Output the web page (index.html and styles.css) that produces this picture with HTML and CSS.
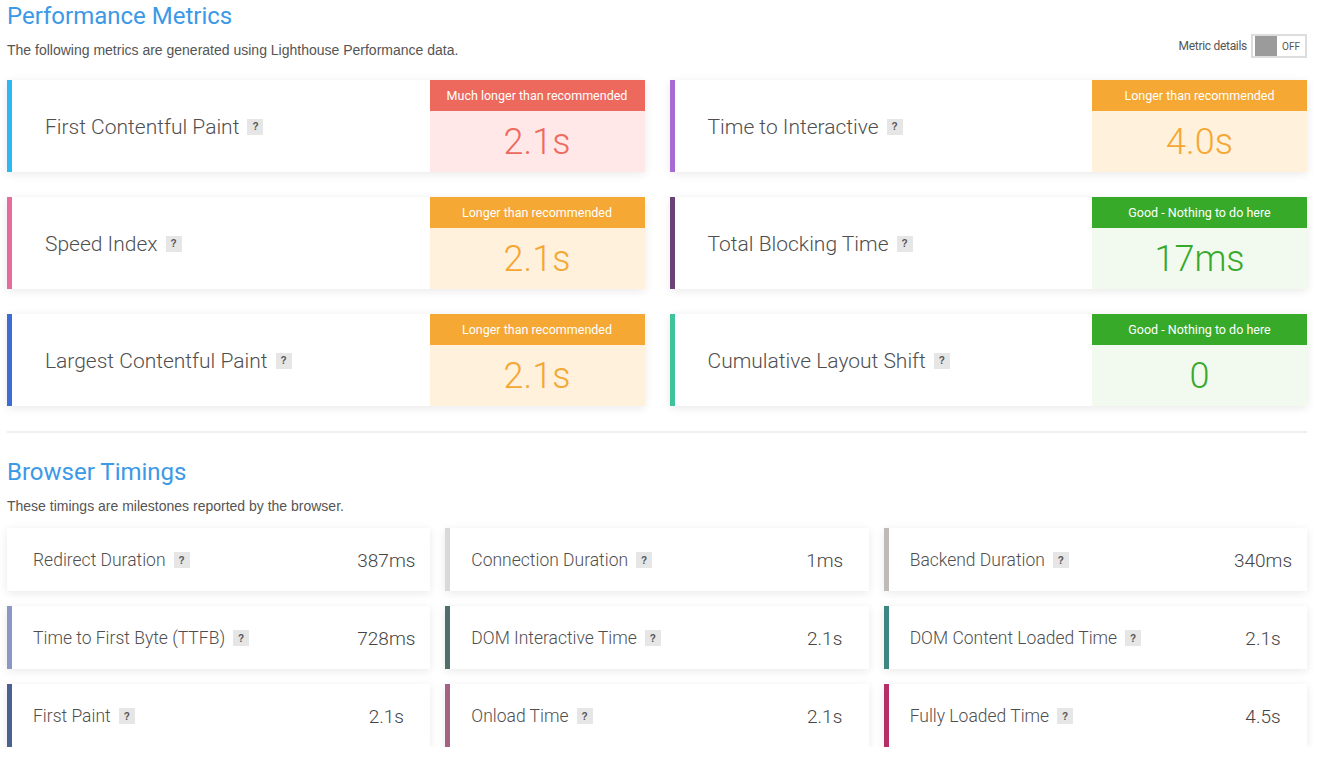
FILE: index.html
```html
<!DOCTYPE html>
<html lang="en">
<head>
<meta charset="utf-8">
<title>Performance</title>
<link rel="stylesheet" href="styles.css">
</head>
<body>
<div class="page">
  <section class="section">
    <div class="section-head">
      <div class="section-intro">
        <h2 class="section-title">Performance Metrics</h2>
        <p class="section-desc">The following metrics are generated using Lighthouse Performance data.</p>
      </div>
      <div class="toggle-wrap">
        <span class="toggle-label">Metric details</span>
        <span class="toggle"><span class="toggle-knob"></span><span class="toggle-text">OFF</span></span>
      </div>
    </div>

    <div class="metrics">
      <div class="metric bar-fcp">
        <div class="metric-label">First Contentful Paint<span class="help">?</span></div>
        <div class="grade grade-bad">
          <div class="grade-head">Much longer than recommended</div>
          <div class="grade-value">2.1s</div>
        </div>
      </div>
      <div class="metric bar-tti">
        <div class="metric-label">Time to Interactive<span class="help">?</span></div>
        <div class="grade grade-warn">
          <div class="grade-head">Longer than recommended</div>
          <div class="grade-value">4.0s</div>
        </div>
      </div>
      <div class="metric bar-si">
        <div class="metric-label">Speed Index<span class="help">?</span></div>
        <div class="grade grade-warn">
          <div class="grade-head">Longer than recommended</div>
          <div class="grade-value">2.1s</div>
        </div>
      </div>
      <div class="metric bar-tbt">
        <div class="metric-label">Total Blocking Time<span class="help">?</span></div>
        <div class="grade grade-good">
          <div class="grade-head">Good - Nothing to do here</div>
          <div class="grade-value">17ms</div>
        </div>
      </div>
      <div class="metric bar-lcp">
        <div class="metric-label">Largest Contentful Paint<span class="help">?</span></div>
        <div class="grade grade-warn">
          <div class="grade-head">Longer than recommended</div>
          <div class="grade-value">2.1s</div>
        </div>
      </div>
      <div class="metric bar-cls">
        <div class="metric-label">Cumulative Layout Shift<span class="help">?</span></div>
        <div class="grade grade-good">
          <div class="grade-head">Good - Nothing to do here</div>
          <div class="grade-value">0</div>
        </div>
      </div>
    </div>
  </section>

  <hr class="divider">

  <section class="section">
    <div class="section-head">
      <div class="section-intro">
        <h2 class="section-title">Browser Timings</h2>
        <p class="section-desc">These timings are milestones reported by the browser.</p>
      </div>
    </div>

    <div class="timings">
      <div class="timing bar-redirect">
        <div class="timing-label">Redirect Duration<span class="help">?</span></div>
        <div class="timing-value">387ms</div>
      </div>
      <div class="timing bar-connect">
        <div class="timing-label">Connection Duration<span class="help">?</span></div>
        <div class="timing-value">1ms</div>
      </div>
      <div class="timing bar-backend">
        <div class="timing-label">Backend Duration<span class="help">?</span></div>
        <div class="timing-value">340ms</div>
      </div>
      <div class="timing bar-ttfb">
        <div class="timing-label">Time to First Byte (TTFB)<span class="help">?</span></div>
        <div class="timing-value">728ms</div>
      </div>
      <div class="timing bar-domi">
        <div class="timing-label">DOM Interactive Time<span class="help">?</span></div>
        <div class="timing-value">2.1s</div>
      </div>
      <div class="timing bar-domc">
        <div class="timing-label">DOM Content Loaded Time<span class="help">?</span></div>
        <div class="timing-value">2.1s</div>
      </div>
      <div class="timing bar-fp">
        <div class="timing-label">First Paint<span class="help">?</span></div>
        <div class="timing-value">2.1s</div>
      </div>
      <div class="timing bar-onload">
        <div class="timing-label">Onload Time<span class="help">?</span></div>
        <div class="timing-value">2.1s</div>
      </div>
      <div class="timing bar-full">
        <div class="timing-label">Fully Loaded Time<span class="help">?</span></div>
        <div class="timing-value">4.5s</div>
      </div>
    </div>
  </section>
</div>
</body>
</html>
```

FILE: styles.css
```css
* { box-sizing: border-box; }

html, body {
  margin: 0;
  padding: 0;
  background: #ffffff;
}

body {
  font-family: Roboto, "Liberation Sans", sans-serif;
  color: #505050;
}

.page {
  padding: 0 15px 0 7px;
}

.section-head {
  display: flex;
  justify-content: space-between;
  align-items: flex-end;
}

.section-title {
  margin: 0;
  padding-top: 2px;
  font-size: 24px;
  line-height: 28px;
  font-weight: 400;
  color: #3b99e6;
}

.section-desc {
  margin: 12px 0 0;
  font-family: "Liberation Sans", Arial, sans-serif;
  font-size: 14px;
  line-height: 16px;
  color: #555555;
}

.toggle-wrap {
  display: flex;
  align-items: center;
  gap: 4px;
}

.toggle-label {
  font-size: 12px;
  letter-spacing: -0.3px;
  color: #555;
}

.toggle {
  display: flex;
  align-items: center;
  width: 56px;
  height: 24px;
  border: 2px solid #dddddd;
  padding-left: 2px;
  background: #fff;
}

.toggle-knob {
  width: 22px;
  height: 20px;
  background: #9b9b9b;
}

.toggle-text {
  flex: 1;
  text-align: center;
  font-size: 10px;
  color: #555;
}

/* Metric cards */
.metrics {
  margin-top: 22px;
  display: grid;
  grid-template-columns: 1fr 1fr;
  column-gap: 25px;
  row-gap: 25px;
}

.metric {
  display: flex;
  height: 92px;
  background: #fff;
  border-left: 5px solid #ccc;
  box-shadow: 0 2px 9px rgba(0, 0, 0, 0.09);
}

.metric-label {
  flex: 1;
  display: flex;
  align-items: center;
  padding-left: 33px;
  padding-top: 1px;
  font-size: 21px;
  font-weight: 300;
  color: #4f4f4f;
}

.help {
  display: inline-flex;
  align-items: center;
  justify-content: center;
  width: 16px;
  height: 16px;
  margin-left: 8px;
  background: #e6e6e6;
  font-family: "Liberation Sans", Arial, sans-serif;
  font-size: 10px;
  font-weight: 700;
  color: #555;
}

.grade {
  width: 215px;
  display: flex;
  flex-direction: column;
}

.grade-head {
  height: 31px;
  line-height: 31px;
  text-align: center;
  color: #fff;
  font-size: 12.5px;
  font-weight: 400;
}

.grade-value {
  flex: 1;
  display: flex;
  align-items: center;
  justify-content: center;
  font-size: 36px;
  font-weight: 300;
}

.grade-bad .grade-head { background: #ed695d; }
.grade-bad .grade-value { background: #ffe8e7; color: #ec6a5e; }
.grade-warn .grade-head { background: #f5a833; }
.grade-warn .grade-value { background: #fff1dc; color: #f4a733; }
.grade-good .grade-head { background: #37aa29; }
.grade-good .grade-value { background: #f2faf0; color: #37a92a; }

.bar-fcp { border-left-color: #2cb8f3; }
.bar-tti { border-left-color: #a86ad3; }
.bar-si { border-left-color: #e76c9d; }
.bar-tbt { border-left-color: #6b4177; }
.bar-lcp { border-left-color: #3f6cd4; }
.bar-cls { border-left-color: #40c39a; }

.divider {
  margin: 25px 0 0;
  border: 0;
  height: 2px;
  background: #efefef;
}

.section + .divider + .section {
  margin-top: 23px;
}

/* Timing cards */
.timings {
  margin-top: 14px;
  display: grid;
  grid-template-columns: 1fr 1fr 1fr;
  column-gap: 15px;
  row-gap: 15px;
}

.timing {
  display: flex;
  height: 63px;
  background: #fff;
  border-left: 5px solid #ccc;
  box-shadow: 0 2px 9px rgba(0, 0, 0, 0.09);
}

.timing-label {
  flex: 1;
  display: flex;
  align-items: center;
  padding-left: 21px;
  padding-top: 1px;
  font-size: 17.5px;
  font-weight: 300;
  color: #4f4f4f;
}

.timing-value {
  width: 88px;
  display: flex;
  align-items: center;
  justify-content: center;
  padding-top: 1px;
  font-size: 19px;
  font-weight: 300;
  color: #444;
}

.bar-redirect { border-left-color: #ffffff; }
.bar-connect { border-left-color: #d9d9d9; }
.bar-backend { border-left-color: #bfbab8; }
.bar-ttfb { border-left-color: #8b98c6; }
.bar-domi { border-left-color: #4d6e6b; }
.bar-domc { border-left-color: #3d8681; }
.bar-fp { border-left-color: #4c618f; }
.bar-onload { border-left-color: #a65f85; }
.bar-full { border-left-color: #b52e68; }
```
